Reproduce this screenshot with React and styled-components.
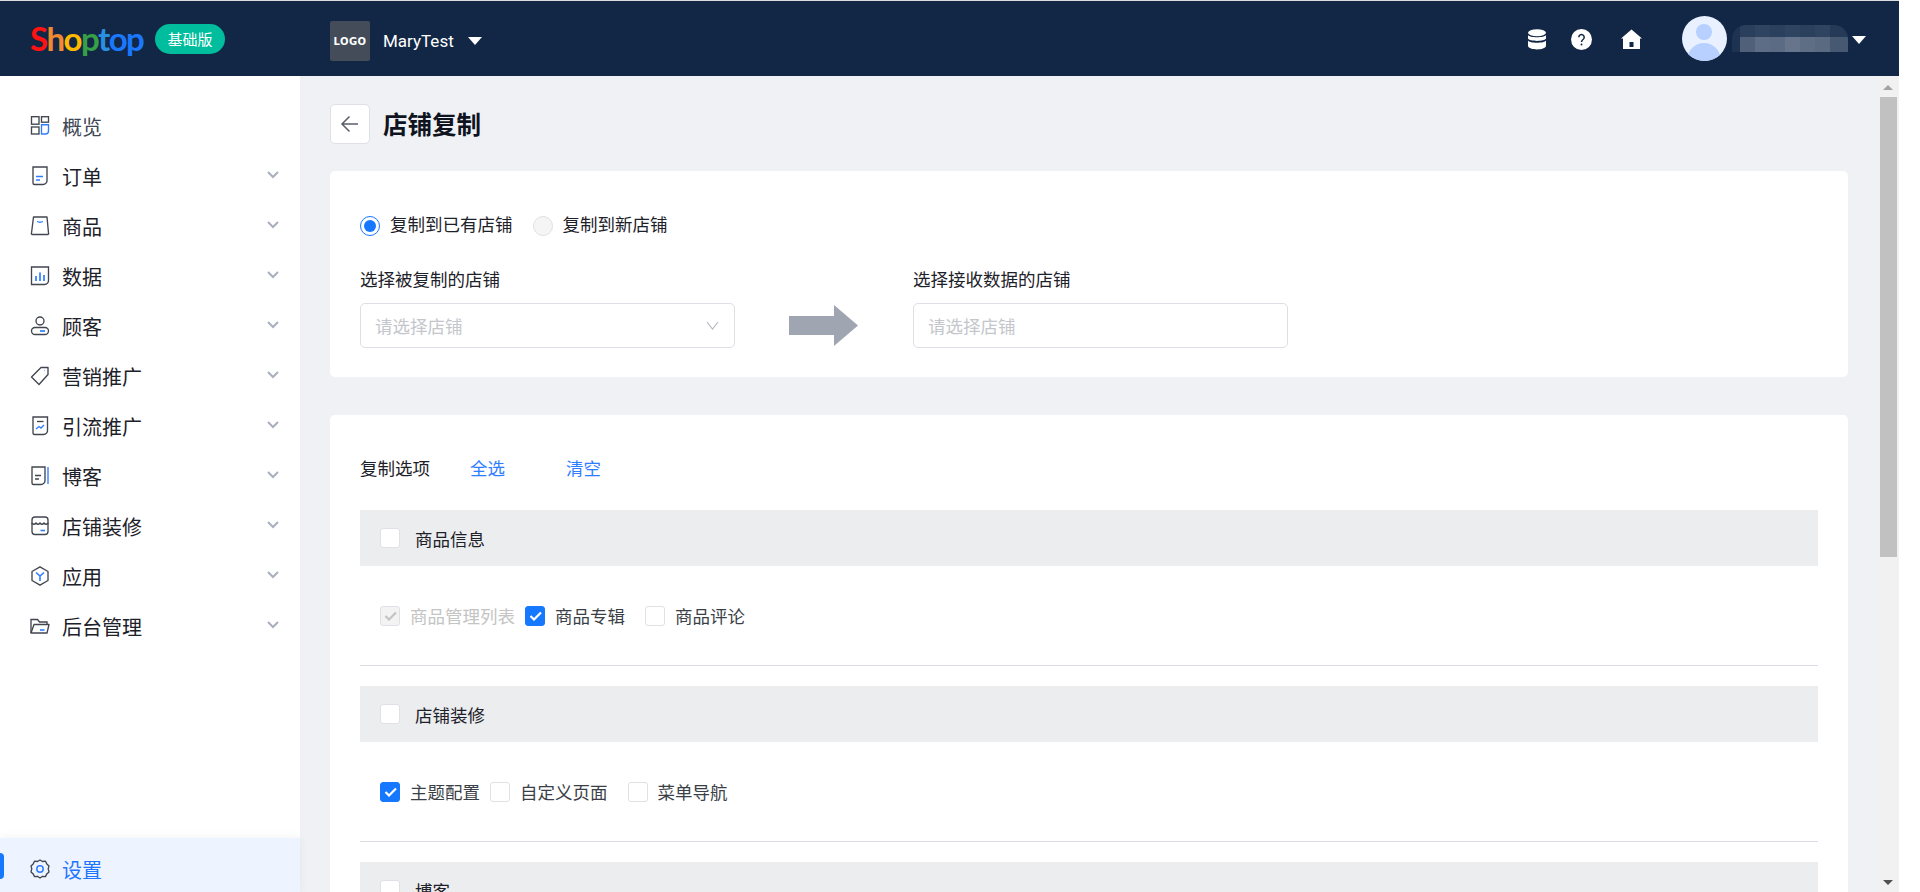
import React from 'react';
import styled, { createGlobalStyle } from 'styled-components';

const ACCENT = '#2f7dff';
const INK = '#41464f';

const GlobalStyle = createGlobalStyle`
  html, body {
    margin: 0;
    padding: 0;
    height: 100%;
    background: #fff;
    overflow: hidden;
  }
  body {
    font-family: "Noto Sans CJK SC", "Noto Sans", sans-serif;
    font-size: 17.5px;
    color: #1d2129;
  }
  * {
    box-sizing: border-box;
  }
`;

const Page = styled.div`
  width: 1899px;
  height: 892px;
  border-top: 1px solid #dcdcdc;
  display: flex;
  flex-direction: column;
  overflow: hidden;
`;

const Header = styled.header`
  height: 75px;
  flex: none;
  background: #122745;
  display: flex;
  align-items: center;
  color: #fff;
`;

const Brand = styled.div`
  width: 330px;
  padding-left: 30px;
  display: flex;
  align-items: center;
  gap: 12px;
`;

const Logo = styled.div`
  font-family: "Lato", sans-serif;
  font-size: 33px;
  line-height: 40px;
  font-weight: 700;
  letter-spacing: -1.5px;
  width: 113px;
  white-space: nowrap;
  margin-top: -2px;
`;

const LogoLetter = styled.span`
  color: ${props => props.$color};
`;

const PlanBadge = styled.span`
  width: 70px;
  height: 30px;
  border-radius: 15px;
  background: #00bd9d;
  font-size: 15px;
  line-height: 30px;
  text-align: center;
`;

const StoreLogo = styled.div`
  width: 40px;
  height: 40px;
  border-radius: 2px;
  background: #434c58;
  display: flex;
  align-items: center;
  justify-content: center;
  font-family: "DejaVu Sans", sans-serif;
  font-weight: 700;
  font-size: 10px;
  letter-spacing: 0.4px;
  margin-top: 5px;
`;

const StoreName = styled.span`
  font-family: "Roboto", sans-serif;
  font-size: 17px;
  margin-left: 13px;
  margin-top: 5px;
`;

const Caret = styled.span`
  width: 0;
  height: 0;
  border-left: 7px solid transparent;
  border-right: 7px solid transparent;
  border-top: 8px solid #fff;
  margin-left: ${props => props.$left}px;
  margin-top: ${props => props.$top}px;
`;

const HeaderRight = styled.div`
  margin-left: auto;
  display: flex;
  align-items: center;
  padding-right: 33px;
`;

const HeaderIcon = styled.svg`
  width: ${props => props.$w}px;
  height: 21px;
  display: block;
  margin-right: ${props => props.$right}px;
  margin-top: 2px;
`;

const Avatar = styled.svg`
  width: 45px;
  height: 45px;
  display: block;
`;

const Mosaic = styled.div`
  width: 116px;
  height: 27px;
  margin-left: 5px;
  border-radius: 14px 14px 0 0;
  overflow: hidden;
  display: flex;
  flex-direction: column;
`;

const MosaicRow = styled.div`
  flex: ${props => props.$size} 0 0;
  display: flex;
`;

const MosaicCell = styled.span`
  flex: ${props => props.$w} 0 0;
  background: ${props => props.$c};
`;

const Body = styled.div`
  flex: 1;
  min-height: 0;
  display: flex;
`;

const Sidebar = styled.aside`
  width: 300px;
  flex: none;
  background: #fff;
  display: flex;
  flex-direction: column;
  justify-content: space-between;
  padding-top: 25px;
  position: relative;
  z-index: 1;
`;

const MenuList = styled.nav`
  display: flex;
  flex-direction: column;
`;

const MenuItem = styled.div`
  height: 50px;
  display: flex;
  align-items: center;
  padding-left: 30px;
  font-size: 20px;
  color: ${props => props.$plain ? '#3d4654' : '#1d2129'};
`;

const MenuIcon = styled.svg`
  width: 20px;
  height: 20px;
  flex: none;
  margin-right: 12px;
  fill: none;
  stroke: ${INK};
  stroke-width: 1.35;
`;

const Chevron = styled.svg`
  width: 12px;
  height: 8px;
  margin-left: auto;
  margin-right: 21px;
  margin-top: -2px;
  fill: none;
  stroke: #a9afbc;
  stroke-width: 2;
`;

const SettingsItem = styled.div`
  height: 54px;
  background: #eef4ff;
  display: flex;
  align-items: center;
  padding: 8px 0 0 30px;
  font-size: 20px;
  color: #1f75ff;
  position: relative;
  box-shadow: 0 0 10px rgba(0, 0, 0, 0.06);
`;

const ActiveMark = styled.span`
  position: absolute;
  left: 0;
  top: 15px;
  width: 4px;
  height: 26px;
  background: #1677ff;
  border-radius: 0 4px 4px 0;
`;

const Main = styled.main`
  flex: 1;
  min-width: 0;
  overflow: hidden;
  background: #f0f1f5;
  padding: 28px 31px 0 30px;
`;

const TitleRow = styled.div`
  height: 40px;
  display: flex;
  align-items: center;
  gap: 13px;
  margin-bottom: 27px;
`;

const BackButton = styled.button`
  width: 40px;
  height: 40px;
  padding: 0;
  background: #fff;
  border: 1px solid #dfe1e6;
  border-radius: 5px;
  display: flex;
  align-items: center;
  justify-content: center;
`;

const Title = styled.h1`
  margin: 0;
  font-size: 24.5px;
  line-height: 34px;
  font-weight: 700;
  color: #0f1420;
`;

const Card = styled.section`
  background: #fff;
  border-radius: 5px;
  padding: ${props => props.$pad};
  margin-bottom: 38px;
`;

const RadioRow = styled.div`
  height: 24px;
  display: flex;
  align-items: center;
  margin-bottom: 30px;
`;

const RadioOption = styled.label`
  display: flex;
  align-items: center;
  gap: 10px;
  margin-right: 20px;
  line-height: 24px;
`;

const RadioText = styled.span`
  margin-top: -4px;
`;

const Radio = styled.span`
  width: 20px;
  height: 20px;
  border-radius: 50%;
  border: 1px solid ${props => props.$on ? '#1677ff' : '#dfe1e6'};
  background: ${props => props.$on ? '#fff' : '#f5f5f5'};
  display: flex;
  align-items: center;
  justify-content: center;

  &::after {
    content: '';
    width: 12px;
    height: 12px;
    border-radius: 50%;
    background: ${props => props.$on ? '#1677ff' : 'transparent'};
  }
`;

const StoreFields = styled.div`
  display: grid;
  grid-template-columns: 375px 178px 375px;
  grid-template-rows: 24px 45px;
  row-gap: 11px;
`;

const FieldLabel = styled.div`
  line-height: 22px;
  grid-column: ${props => props.$col};
`;

const SelectBox = styled.div`
  height: 45px;
  grid-column: ${props => props.$col};
  border: 1px solid #dcdfe6;
  border-radius: 5px;
  padding: 0 14px;
  display: flex;
  align-items: center;
  justify-content: space-between;
  color: #c4c6cc;
`;

const SelectChevron = styled.svg`
  width: 13px;
  height: 9px;
  margin-right: 1px;
  fill: none;
  stroke: #b4b7bf;
  stroke-width: 1.1;
`;

const ArrowSlot = styled.div`
  grid-column: 2;
  grid-row: 2;
  display: flex;
  align-items: center;
  justify-content: center;
  padding-right: 2px;
`;

const BigArrow = styled.svg`
  width: 69px;
  height: 41px;
  fill: #9fa5b1;
`;

const OptionsHead = styled.div`
  height: 26px;
  display: flex;
  align-items: center;
  padding-bottom: 2px;
  margin-bottom: 29px;
`;

const OptionsLabel = styled.span`
  width: 110px;
`;

const TextLink = styled.a`
  color: #2f7dff;
  width: 96px;
  cursor: pointer;
`;

const GroupHeader = styled.div`
  height: 56px;
  background: #ecedef;
  display: flex;
  align-items: center;
  padding-left: 20px;
  gap: 15px;
`;

const GroupRow = styled.div`
  height: 100px;
  display: flex;
  align-items: center;
  padding-left: 20px;
  border-bottom: 1px solid #dcdce4;
  margin-bottom: 20px;
`;

const OptionItem = styled.label`
  display: flex;
  align-items: center;
  gap: 10px;
  margin-right: 20px;
  color: ${props => props.$disabled ? '#c4c4c4' : '#3b3f47'};

  &:first-child {
    margin-right: 10px;
  }
`;

const Box = styled.span`
  width: 20px;
  height: 20px;
  flex: none;
  border-radius: 3px;
  border: 1px solid ${props => props.$on ? '#1677ff' : '#dfe1e6'};
  background: ${props => props.$on ? '#1677ff' : props.$disabled ? '#f3f3f3' : '#fff'};
  display: flex;
  align-items: center;
  justify-content: center;
`;

const Tick = styled.svg`
  width: 13px;
  height: 10px;
  fill: none;
  stroke: ${props => props.$on ? '#fff' : '#c4c4c4'};
  stroke-width: 2.2;
`;

const ScrollTrack = styled.div`
  width: 20px;
  flex: none;
  background: #f1f1f1;
  display: flex;
  flex-direction: column;
  align-items: center;
  padding: 9px 0 7px;
`;

const ScrollUp = styled.span`
  width: 0;
  height: 0;
  border-left: 5px solid transparent;
  border-right: 5px solid transparent;
  border-bottom: 5px solid #a3a3a3;
  margin-left: -2px;
`;

const ScrollThumb = styled.div`
  width: 17px;
  height: 460px;
  margin: 7px 2px 0 1px;
  background: #c1c1c1;
`;

const ScrollDown = styled.span`
  width: 0;
  height: 0;
  margin-top: auto;
  margin-left: -2px;
  border-left: 5px solid transparent;
  border-right: 5px solid transparent;
  border-top: 5px solid #505050;
`;

const Accent = styled.g`
  stroke: ${ACCENT};
`;

const menu = [
  {
    label: '概览',
    plain: true,
    icon: (
      <>
        <rect x="1.500" y="0.700" width="7.500" height="7.500" />
        <rect x="11.500" y="0.700" width="7" height="5.500" />
        <rect x="1.500" y="11" width="7.500" height="7" />
        <Accent><path d="M11.500 8.700h7V15a3 3 0 0 1-3 3h-4z" /></Accent>
      </>
    ),
  },
  {
    label: '订单',
    icon: (
      <>
        <path d="M3 1h14v13a4 4 0 0 1-4 4.500H4.500A1.500 1.500 0 0 1 3 17z" />
        <Accent><path d="M6 10.500h7M6 14h4" /></Accent>
      </>
    ),
  },
  {
    label: '商品',
    icon: (
      <>
        <path d="M3.500 1h13.500l1.500 16a1 1 0 0 1-1 1.500H2.500a1 1 0 0 1-1-1.500z" strokeLinejoin="round" />
        <Accent><path d="M7 5.500q3 1.500 6 0" /></Accent>
      </>
    ),
  },
  {
    label: '数据',
    icon: (
      <>
        <path d="M1.500 1h17v13a4 4 0 0 1-4 4.500h-13z" />
        <Accent strokeWidth="1.700"><path d="M6 10v5M10 6.500V15M14 9v6" /></Accent>
      </>
    ),
  },
  {
    label: '顾客',
    icon: (
      <>
        <circle cx="10" cy="5" r="4" />
        <rect x="1.500" y="11.500" width="17" height="7" rx="3.500" />
        <Accent strokeWidth="1.700"><path d="M10 15h5" /></Accent>
      </>
    ),
  },
  {
    label: '营销推广',
    icon: (
      <>
        <path d="M11 1.500h7v7L9 18.500 1.500 11z" strokeLinejoin="round" />
        <Accent strokeWidth="1.700"><path d="M14.500 4.500h.5" /></Accent>
      </>
    ),
  },
  {
    label: '引流推广',
    icon: (
      <>
        <path d="M3 1h14.500v13a4 4 0 0 1-4 4.500H4.500A1.500 1.500 0 0 1 3 17z" />
        <path d="M7 5.500h6.500" />
        <Accent><path d="M6 13l3-2.500 2 1.500 3-3" /></Accent>
      </>
    ),
  },
  {
    label: '博客',
    icon: (
      <>
        <path d="M2 1h13v13a4 4 0 0 1-4 4.500H3.500A1.500 1.500 0 0 1 2 17z" />
        <path d="M5 9.500h6M5 13h4" />
        <Accent><path d="M18 1v17" /></Accent>
      </>
    ),
  },
  {
    label: '店铺装修',
    icon: (
      <>
        <path d="M2 8V4a3 3 0 0 1 3-3h10a3 3 0 0 1 3 3v4" />
        <path d="M2 7q2 2.500 4 0 2 2.500 4 0 2 2.500 4 0 2 2.500 4 0" />
        <path d="M2 7v8.500a3 3 0 0 0 3 3h10a3 3 0 0 0 3-3V7" />
        <Accent strokeWidth="1.600"><path d="M10.500 14.500h4.500" /></Accent>
      </>
    ),
  },
  {
    label: '应用',
    icon: (
      <>
        <path d="M10 .8l8 4.700v9L10 19.200l-8-4.700v-9z" strokeLinejoin="round" />
        <Accent strokeWidth="1.600"><path d="M6 6.500l4 3.500 4-3.500M10 10v5" /></Accent>
      </>
    ),
  },
  {
    label: '后台管理',
    icon: (
      <>
        <path d="M1 17V3.500h6.500l2 2.500H17v2.500" />
        <path d="M1 17l3-8.500h15L17 17z" strokeLinejoin="round" />
        <Accent strokeWidth="1.600"><path d="M10 14h4.500" /></Accent>
      </>
    ),
  },
];

const mosaicTop = [['#1d3351', 8], ['#2a3f5b', 15], ['#2f4460', 15], ['#2a405c', 15], ['#2f4460', 15], ['#2a405c', 15], ['#2f4460', 15], ['#253a57', 18]];
const mosaicBottom = [['#1d3351', 8], ['#4f6078', 15], ['#5d6d85', 15], ['#5a6b83', 15], ['#66758b', 15], ['#5e6e85', 15], ['#596a81', 15], ['#475972', 18]];

const groups = [
  {
    title: '商品信息',
    items: [
      { label: '商品管理列表', disabled: true },
      { label: '商品专辑', on: true },
      { label: '商品评论' },
    ],
  },
  {
    title: '店铺装修',
    items: [
      { label: '主题配置', on: true },
      { label: '自定义页面' },
      { label: '菜单导航' },
    ],
  },
  { title: '博客', items: [] },
];

const logoLetters = [
  ['S', '#ff1212'],
  ['h', '#f08a32'],
  ['o', '#ffb900'],
  ['p', '#36a047'],
  ['t', '#2a8fe2'],
  ['o', '#1a78ff'],
  ['p', '#1a78ff'],
];

const Check = ({ on, disabled }) => (
  <Box $on={on} $disabled={disabled}>
    {(on || disabled) && (
      <Tick $on={on} viewBox="0 0 13 10">
        <path d="M1.500 5l3.500 3.500 7-7" />
      </Tick>
    )}
  </Box>
);

const App = () => (
  <Page>
    <GlobalStyle />
    <Header>
      <Brand>
        <Logo>
          {logoLetters.map(([ch, color], i) => (
            <LogoLetter key={i} $color={color}>{ch}</LogoLetter>
          ))}
        </Logo>
        <PlanBadge>基础版</PlanBadge>
      </Brand>
      <StoreLogo>LOGO</StoreLogo>
      <StoreName>MaryTest</StoreName>
      <Caret $left={14} $top={5} />
      <HeaderRight>
        <HeaderIcon $w={18} $right={25} viewBox="0 0 18 21">
          <ellipse cx="9" cy="3.700" rx="9" ry="3.500" fill="#fff" />
          <path d="M0 6c1 3 17 3 18 0v3.500c-1 3.200-17 3.200-18 0z" fill="#fff" />
          <path d="M0 11.500c1 3 17 3 18 0V17c-1 4.500-17 4.500-18 0z" fill="#fff" />
        </HeaderIcon>
        <HeaderIcon $w={21} $right={29} viewBox="0 0 21 21">
          <circle cx="10.500" cy="10.500" r="10.500" fill="#fff" />
          <path d="M7.800 8.200a2.700 2.700 0 1 1 4.200 2.300c-1 .7-1.500 1.200-1.500 2.500" fill="none" stroke="#122745" strokeWidth="1.500" />
          <circle cx="10.500" cy="15.600" r="1" fill="#122745" />
        </HeaderIcon>
        <HeaderIcon $w={21} $right={40} viewBox="0 0 21 21">
          <path d="M10.500 0.500L21 9.500h-2V20H2V9.500H0z" fill="#fff" />
          <rect x="8.500" y="13" width="4" height="5" fill="#122745" />
        </HeaderIcon>
        <Avatar viewBox="0 0 45 45">
          <defs>
            <clipPath id="avatar-clip"><circle cx="22.500" cy="22.500" r="22.500" /></clipPath>
          </defs>
          <g clipPath="url(#avatar-clip)">
            <rect width="45" height="45" fill="#e9f0ff" />
            <circle cx="22" cy="16" r="8" fill="#b7d0ff" />
            <ellipse cx="22" cy="43" rx="16.500" ry="16" fill="#b7d0ff" />
          </g>
        </Avatar>
        <Mosaic>
          <MosaicRow $size={12}>
            {mosaicTop.map(([c, w], i) => <MosaicCell key={i} $c={c} $w={w} />)}
          </MosaicRow>
          <MosaicRow $size={15}>
            {mosaicBottom.map(([c, w], i) => <MosaicCell key={i} $c={c} $w={w} />)}
          </MosaicRow>
        </Mosaic>
        <Caret $left={4} $top={3} />
      </HeaderRight>
    </Header>
    <Body>
      <Sidebar>
        <MenuList>
          {menu.map(item => (
            <MenuItem key={item.label} $plain={item.plain}>
              <MenuIcon viewBox="0 0 20 20">{item.icon}</MenuIcon>
              {item.label}
              {!item.plain && (
                <Chevron viewBox="0 0 12 8"><path d="M1 1l5 5 5-5" /></Chevron>
              )}
            </MenuItem>
          ))}
        </MenuList>
        <SettingsItem>
          <ActiveMark />
          <MenuIcon viewBox="0 0 20 20">
            <path d="M10 1l2.500 1.500 3-.3 1.300 2.700 2.200 2-.8 3 .8 3-2.200 2-1.300 2.700-3-.3L10 19l-2.500-1.700-3 .3-1.300-2.700-2.200-2 .8-3-.8-3 2.200-2 1.300-2.700 3 .3z" strokeLinejoin="round" />
            <Accent strokeWidth="1.500"><circle cx="10" cy="10" r="3.200" /></Accent>
          </MenuIcon>
          设置
        </SettingsItem>
      </Sidebar>
      <Main>
        <TitleRow>
          <BackButton aria-label="返回">
            <svg width="20" height="20" viewBox="0 0 20 20" fill="none" stroke="#5a5f69" strokeWidth="1.500">
              <path d="M18 10H2.500M9.500 2.500L2 10l7.500 7.500" />
            </svg>
          </BackButton>
          <Title>店铺复制</Title>
        </TitleRow>
        <Card $pad="43px 30px 29px">
          <RadioRow>
            <RadioOption><Radio $on /><RadioText>复制到已有店铺</RadioText></RadioOption>
            <RadioOption><Radio /><RadioText>复制到新店铺</RadioText></RadioOption>
          </RadioRow>
          <StoreFields>
            <FieldLabel $col={1}>选择被复制的店铺</FieldLabel>
            <FieldLabel $col={3}>选择接收数据的店铺</FieldLabel>
            <SelectBox $col={1}>
              请选择店铺
              <SelectChevron viewBox="0 0 13 9"><path d="M1 1l5.500 7L12 1" /></SelectChevron>
            </SelectBox>
            <ArrowSlot>
              <BigArrow viewBox="0 0 69 41">
                <path d="M0 11h45V0l24 20.500L45 41V30H0z" />
              </BigArrow>
            </ArrowSlot>
            <SelectBox $col={3}>请选择店铺</SelectBox>
          </StoreFields>
        </Card>
        <Card $pad="40px 30px 0">
          <OptionsHead>
            <OptionsLabel>复制选项</OptionsLabel>
            <TextLink>全选</TextLink>
            <TextLink>清空</TextLink>
          </OptionsHead>
          {groups.map(group => (
            <div key={group.title}>
              <GroupHeader>
                <Box />
                {group.title}
              </GroupHeader>
              {group.items.length > 0 && (
                <GroupRow>
                  {group.items.map(item => (
                    <OptionItem key={item.label} $disabled={item.disabled}>
                      <Check on={item.on} disabled={item.disabled} />
                      {item.label}
                    </OptionItem>
                  ))}
                </GroupRow>
              )}
            </div>
          ))}
        </Card>
      </Main>
      <ScrollTrack>
        <ScrollUp />
        <ScrollThumb />
        <ScrollDown />
      </ScrollTrack>
    </Body>
  </Page>
);

export default App;
